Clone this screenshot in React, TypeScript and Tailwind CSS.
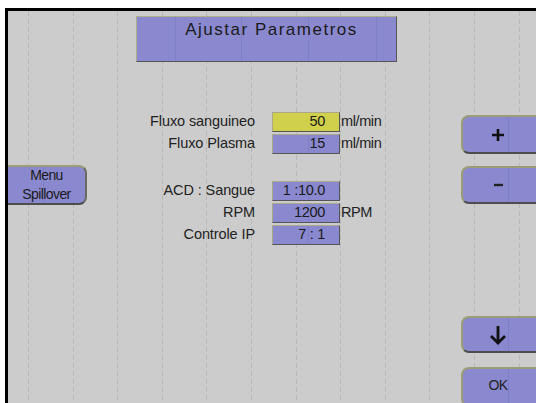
import React from "react";

const rows1 = [
  { label: "Fluxo sanguineo", value: "50", unit: "ml/min", active: true },
  { label: "Fluxo Plasma", value: "15", unit: "ml/min", active: false },
];

const rows2 = [
  { label: "ACD : Sangue", value: "1 :10.0", unit: "" },
  { label: "RPM", value: "1200", unit: "RPM" },
  { label: "Controle IP", value: "7 : 1", unit: "" },
];

const gridLines = Array.from({ length: 12 }, (_, i) => 20 + i * 44.6);

function ValueRow({
  label,
  value,
  unit,
  active,
}: {
  label: string;
  value: string;
  unit: string;
  active?: boolean;
}) {
  return (
    <div className="flex items-center h-[20px]">
      <div className="w-[168px] shrink-0 text-right text-[14.5px] tracking-[-0.1px] text-[#222]">{label}</div>
      <div
        className={`relative shrink-0 ml-[17px] w-[68px] h-[20px] flex items-center justify-end pr-[14px] text-[14.5px] tracking-[-0.3px] text-[#1a1a1a] border-[1.5px] border-t-[#aaa888] border-l-[#aaa888] border-b-[#555] border-r-[#555] ${
          active ? "bg-[#d0d04c]" : "bg-[#8a89cf]"
        }`}
      >
        {!active && <div className="absolute left-[35px] top-0 bottom-0 w-px bg-[#7f7ec8]" />}
        <span className="relative">{value}</span>
      </div>
      <div className="ml-[1px] text-[14.5px] tracking-[-0.4px] text-[#222]">{unit}</div>
    </div>
  );
}

function SideButton({ children, className = "" }: { children: React.ReactNode; className?: string }) {
  return (
    <div
      className={`relative shrink-0 w-[90px] pr-[16px] flex items-center justify-center rounded-l-[8px] bg-[#8a89cf] border-2 border-[#9c9c78] border-b-[#4d4d4d] text-[#111] ${className}`}
    >
      <div className="absolute left-[45px] top-0 bottom-0 w-px bg-[#7f7ec8]" />
      <span className="relative flex items-center">{children}</span>
    </div>
  );
}

export default function App() {
  return (
    <div
      className="w-[536px] h-[403px] bg-white pl-[5px] pt-[8px] flex overflow-hidden"
      style={{ fontFamily: '"Liberation Sans", Arial, sans-serif' }}
    >
      <div className="relative flex-1 flex bg-[#cccccc] border-t-[3px] border-l-[3px] border-black overflow-hidden">
        {gridLines.map((x) => (
          <div
            key={x}
            className="absolute top-0 bottom-0 w-px bg-[repeating-linear-gradient(to_bottom,#b8b8b8_0_5px,transparent_5px_8px)]"
            style={{ left: x }}
          />
        ))}

        {/* left column */}
        <div className="relative shrink-0 w-[79px] pt-[154px]">
          <div className="relative w-[79px] h-[40px] flex flex-col items-center justify-center leading-[19px] rounded-r-[8px] bg-[#8a89cf] border-2 border-l-0 border-[#9c9c78] border-b-[#4d4d4d] border-r-[#6a6a60] text-[14px] tracking-[-0.6px] text-[#1a1a1a]">
            <div className="absolute left-[35px] top-0 bottom-0 w-px bg-[#7f7ec8]" />
            <span className="relative">Menu</span>
            <span className="relative">Spillover</span>
          </div>
        </div>

        {/* center column */}
        <div className="relative shrink-0 w-[374px] flex flex-col">
          <div className="relative mt-[5px] ml-[49px] w-[261px] h-[46px] bg-[#8a89cf] border-[1.5px] border-t-[#b0ae88] border-l-[#b0ae88] border-b-[#555] border-r-[#555] flex justify-center pl-[10px]">
            {[38, 104, 171, 239].map((x) => (
              <div key={x} className="absolute top-0 bottom-0 w-px bg-[#7f7ec8]" style={{ left: x }} />
            ))}
            <span className="relative text-[17px] tracking-[1.5px] text-[#1a1a1a]">Ajustar Parametros</span>
          </div>

          <div className="mt-[50px] flex flex-col gap-[2px]">
            {rows1.map((r) => (
              <ValueRow key={r.label} {...r} />
            ))}
          </div>

          <div className="mt-[27px] flex flex-col gap-[2px]">
            {rows2.map((r) => (
              <ValueRow key={r.label} {...r} />
            ))}
          </div>
        </div>

        {/* right column */}
        <div className="relative flex-1 min-w-0 flex flex-col pt-[104px]">
          <SideButton className="h-[39px]">
            <svg width="14" height="14" viewBox="0 0 14 14">
              <path d="M7 1v12M1 7h12" stroke="#111" strokeWidth="2.6" />
            </svg>
          </SideButton>
          <SideButton className="h-[38px] mt-[12px]">
            <svg width="9" height="4" viewBox="0 0 9 4">
              <path d="M0 2h9" stroke="#222" strokeWidth="2.4" />
            </svg>
          </SideButton>
          <SideButton className="h-[37px] mt-[112px]">
            <svg width="18" height="20" viewBox="0 0 18 20">
              <path d="M9 1v17M2 11l7 7 7-7" stroke="#111" strokeWidth="2.8" fill="none" />
            </svg>
          </SideButton>
          <SideButton className="h-[40px] mt-[14px] pb-[3px]">
            <span className="text-[14px] tracking-[-0.6px] text-[#222]">OK</span>
          </SideButton>
        </div>
      </div>
    </div>
  );
}
